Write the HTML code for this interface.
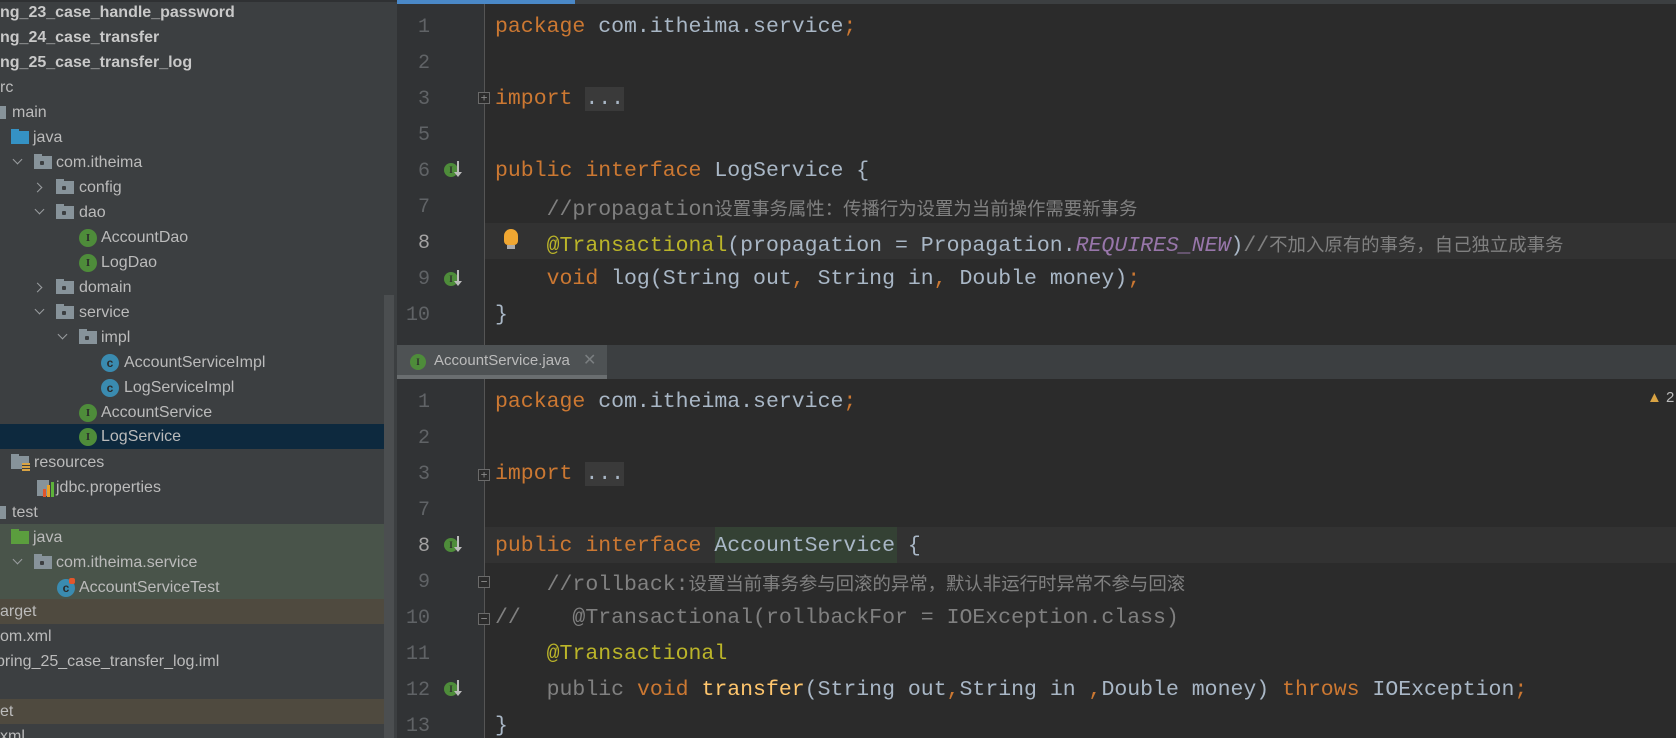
<!DOCTYPE html>
<html><head><meta charset="utf-8"><style>
*{margin:0;padding:0;box-sizing:border-box}
body{width:1676px;height:738px;overflow:hidden;background:#2b2b2b;position:relative;font-family:"Liberation Sans","Noto Sans CJK SC",sans-serif}
.side{position:absolute;left:0;top:0;width:397px;height:738px;background:#3c3f41;overflow:hidden}
.r{position:absolute;left:0;width:384px;height:25px;line-height:25px;font-size:16px;color:#bbbbbb;white-space:nowrap}
.r span.t{position:absolute;top:0}
.b{font-weight:bold;color:#c9c9c9}
.ar{position:absolute;top:8px;width:7px;height:7px;border-right:1.5px solid #9a9da0;border-bottom:1.5px solid #9a9da0}
.dn{transform:rotate(45deg);top:6px}
.rt{transform:rotate(-45deg);top:9px}
.fd{position:absolute;top:6px;width:18px;height:13px;background:#87939a}
.fd::before{content:"";position:absolute;left:0;top:-2px;width:8px;height:3px;background:inherit}
.fd.p::after{content:"";position:absolute;left:6px;top:5px;width:4px;height:4px;background:#3c3f41;border-radius:1px}
.ic{position:absolute;top:4px;width:18px;height:18px;border-radius:50%;font:bold 11px "Liberation Serif",serif;text-align:center;line-height:18px;color:#2b2b2b}
.ii{background:#4e8c3a}
.cc{background:#3a8bb0;font-family:"Liberation Sans";font-size:12px}
.ed{position:absolute;left:397px;width:1279px;background:#2b2b2b;overflow:hidden}
.gut{position:absolute;left:0;top:0;bottom:0;width:88px;background:#313335}
.gl{position:absolute;left:87px;top:0;bottom:0;width:1px;background:#555555}
.ln{position:absolute;left:0;width:33px;text-align:right;font:20px "Liberation Mono",monospace;color:#606366;height:36px;line-height:36px;transform:translateY(2px)}
.cl{position:absolute;left:98px;height:36px;line-height:36px;font:21.5px "Liberation Mono","Noto Sans CJK SC",monospace;color:#a9b7c6;white-space:pre;transform:translateY(7px)}
.k{color:#cc7832}.c{color:#808080}.a{color:#bbb529}.s{color:#9876aa;font-style:italic}.m{color:#ffc66d}
.z{font-family:"Noto Sans CJK SC",sans-serif;font-size:18.4px;color:#808080}
.cur{position:absolute;left:88px;right:0;height:36px;background:#323232}
.gi{position:absolute;width:14px;height:14px;border-radius:50%;background:#4e8c3a;font:bold 9px "Liberation Serif",serif;color:#2b2b2b;text-align:center;line-height:14px}
.garr{position:absolute;width:2px;height:14px;background:#bbb}
.garr::after{content:"";position:absolute;left:-3px;bottom:-2px;border-left:4px solid transparent;border-right:4px solid transparent;border-top:5px solid #bbb}
.fold{position:absolute;width:12px;height:12px;border:1px solid #6a6a6a;background:#2b2b2b;color:#8a8a8a;font:11px monospace;line-height:10px;text-align:center}
.dots{background:#3a3a3a;color:#a9b7c6}
</style></head><body>
<div class="side">
<div style="position:absolute;left:0;top:0;width:397px;height:2px;background:#2f3133"></div>
<div class="r b" style="top:0"><span class="t" style="left:0">ng_23_case_handle_password</span></div>
<div class="r b" style="top:25px"><span class="t" style="left:0">ng_24_case_transfer</span></div>
<div class="r b" style="top:50px"><span class="t" style="left:0">ng_25_case_transfer_log</span></div>
<div class="r" style="top:75px"><span class="t" style="left:0">rc</span></div>
<div class="r" style="top:100px"><div class="fd" style="left:-12px"></div><span class="t" style="left:12px">main</span></div>
<div class="r" style="top:125px"><div class="fd" style="left:11px;background:#3592c4"></div><span class="t" style="left:33px">java</span></div>
<div class="r" style="top:150px"><div class="ar dn" style="left:14px"></div><div class="fd p" style="left:34px"></div><span class="t" style="left:56px">com.itheima</span></div>
<div class="r" style="top:175px"><div class="ar rt" style="left:34px"></div><div class="fd p" style="left:56px"></div><span class="t" style="left:79px">config</span></div>
<div class="r" style="top:200px"><div class="ar dn" style="left:36px"></div><div class="fd p" style="left:56px"></div><span class="t" style="left:79px">dao</span></div>
<div class="r" style="top:225px"><div class="ic ii" style="left:79px">I</div><span class="t" style="left:101px">AccountDao</span></div>
<div class="r" style="top:250px"><div class="ic ii" style="left:79px">I</div><span class="t" style="left:101px">LogDao</span></div>
<div class="r" style="top:275px"><div class="ar rt" style="left:34px"></div><div class="fd p" style="left:56px"></div><span class="t" style="left:79px">domain</span></div>
<div class="r" style="top:300px"><div class="ar dn" style="left:36px"></div><div class="fd p" style="left:56px"></div><span class="t" style="left:79px">service</span></div>
<div class="r" style="top:325px"><div class="ar dn" style="left:59px"></div><div class="fd p" style="left:79px"></div><span class="t" style="left:101px">impl</span></div>
<div class="r" style="top:350px"><div class="ic cc" style="left:101px">c</div><span class="t" style="left:124px">AccountServiceImpl</span></div>
<div class="r" style="top:375px"><div class="ic cc" style="left:101px">c</div><span class="t" style="left:124px">LogServiceImpl</span></div>
<div class="r" style="top:400px"><div class="ic ii" style="left:79px">I</div><span class="t" style="left:101px">AccountService</span></div>
<div class="r" style="top:424px;background:#0d293e;height:25px"><div class="ic ii" style="left:79px">I</div><span class="t" style="left:101px">LogService</span></div>
<div class="r" style="top:450px"><div class="fd" style="left:11px"></div><div style="position:absolute;left:22px;top:13px;width:8px;height:9px;background:repeating-linear-gradient(#d9a343 0 2px,#3c3f41 2px 3px)"></div><span class="t" style="left:34px">resources</span></div>
<div class="r" style="top:475px"><div style="position:absolute;left:37px;top:5px;width:12px;height:16px;background:#87939a"></div><div style="position:absolute;left:43px;top:14px;width:3px;height:8px;background:#e2562b"></div><div style="position:absolute;left:47px;top:10px;width:3px;height:12px;background:#e9a229"></div><div style="position:absolute;left:51px;top:7px;width:3px;height:15px;background:#5db33a"></div><span class="t" style="left:56px">jdbc.properties</span></div>
<div class="r" style="top:500px"><div class="fd" style="left:-12px"></div><span class="t" style="left:12px">test</span></div>
<div style="position:absolute;left:0;top:524px;width:384px;height:75px;background:#49544a"></div>
<div class="r" style="top:525px"><div class="fd" style="left:11px;background:#5b9e3e"></div><span class="t" style="left:33px">java</span></div>
<div class="r" style="top:550px"><div class="ar dn" style="left:14px"></div><div class="fd p" style="left:34px;background:#87939a"></div><span class="t" style="left:56px">com.itheima.service</span></div>
<div class="r" style="top:575px"><div class="ic cc" style="left:57px">c</div><div style="position:absolute;left:69px;top:3px;width:6px;height:6px;background:#e2562b;border-radius:2px"></div><span class="t" style="left:79px">AccountServiceTest</span></div>
<div style="position:absolute;left:0;top:599px;width:384px;height:25px;background:#4f4a3f"></div>
<div class="r" style="top:599px"><span class="t" style="left:0">arget</span></div>
<div class="r" style="top:624px"><span class="t" style="left:0">om.xml</span></div>
<div class="r" style="top:649px"><span class="t" style="left:-4px">pring_25_case_transfer_log.iml</span></div>
<div style="position:absolute;left:0;top:699px;width:384px;height:25px;background:#4f4a3f"></div>
<div class="r" style="top:699px"><span class="t" style="left:0">et</span></div>
<div class="r" style="top:724px"><span class="t" style="left:0">xml</span></div>
<div style="position:absolute;left:384px;top:295px;width:10px;height:443px;background:#4b4e50"></div>
</div>

<!-- top editor -->
<div class="ed" style="top:0;height:345px">
<div class="gut"></div><div class="gl"></div>
<div style="position:absolute;left:0;top:0;width:178px;height:4px;background:#4a88c7"></div>
<div style="position:absolute;left:178px;top:0;right:0;height:4px;background:#3c3f41"></div>
<div class="cur" style="top:223px"></div>
<div class="ln" style="top:8px">1</div>
<div class="ln" style="top:44px">2</div>
<div class="ln" style="top:80px">3</div>
<div class="ln" style="top:116px">5</div>
<div class="ln" style="top:152px">6</div>
<div class="ln" style="top:188px">7</div>
<div class="ln" style="top:224px;color:#a4a3a3">8</div>
<div class="ln" style="top:260px">9</div>
<div class="ln" style="top:296px">10</div>
<div class="gi" style="left:47px;top:163px">I</div><div class="garr" style="left:60px;top:161px"></div>
<div class="gi" style="left:47px;top:272px">I</div><div class="garr" style="left:60px;top:270px"></div>
<div class="fold" style="left:81px;top:92px">+</div>
<div style="position:absolute;left:107px;top:229px;width:14px;height:16px;background:#f0a732;border-radius:7px 7px 4px 4px"></div>
<div style="position:absolute;left:110px;top:245px;width:8px;height:4px;background:#aaa"></div>
<div class="cl" style="top:8px"><span class="k">package</span> com.itheima.service<span class="k">;</span></div>
<div class="cl" style="top:80px"><span class="k">import</span> <span class="dots">...</span></div>
<div class="cl" style="top:152px"><span class="k">public interface</span> LogService {</div>
<div class="cl" style="top:188px"><span class="c">    //propagation</span><span class="z">设置事务属性：传播行为设置为当前操作需要新事务</span></div>
<div class="cl" style="top:224px">    <span class="a">@Transactional</span>(propagation = Propagation.<span class="s">REQUIRES_NEW</span>)<span class="c">//</span><span class="z">不加入原有的事务，自己独立成事务</span></div>
<div class="cl" style="top:260px">    <span class="k">void</span> log(String out<span class="k">,</span> String in<span class="k">,</span> Double money)<span class="k">;</span></div>
<div class="cl" style="top:296px">}</div>
</div>

<!-- tab bar -->
<div style="position:absolute;left:397px;top:345px;width:1279px;height:34px;background:#3c3f41">
<div style="position:absolute;left:0;top:0;width:210px;height:34px;background:#4e5254"></div>
<div style="position:absolute;left:0;top:30px;width:210px;height:4px;background:#6a6e70"></div>
<div class="gi" style="left:13px;top:9px;width:16px;height:16px;line-height:16px">I</div>
<div style="position:absolute;left:37px;top:0;line-height:32px;font-size:15px;color:#bbbbbb">AccountService.java</div>
<div style="position:absolute;left:186px;top:0;line-height:32px;font-size:16px;color:#7a7e80">✕</div>
</div>

<!-- bottom editor -->
<div class="ed" style="top:379px;height:359px">
<div class="gut"></div><div class="gl"></div>
<div class="cur" style="top:148px"></div>
<div class="ln" style="top:4px">1</div>
<div class="ln" style="top:40px">2</div>
<div class="ln" style="top:76px">3</div>
<div class="ln" style="top:112px">7</div>
<div class="ln" style="top:148px;color:#a4a3a3">8</div>
<div class="ln" style="top:184px">9</div>
<div class="ln" style="top:220px">10</div>
<div class="ln" style="top:256px">11</div>
<div class="ln" style="top:292px">12</div>
<div class="ln" style="top:328px">13</div>
<div class="gi" style="left:47px;top:159px">I</div><div class="garr" style="left:60px;top:157px"></div>
<div class="gi" style="left:47px;top:303px">I</div><div class="garr" style="left:60px;top:301px"></div>
<div class="fold" style="left:81px;top:90px">+</div>
<div class="fold" style="left:81px;top:197px">−</div>
<div class="fold" style="left:81px;top:234px">−</div>
<div style="position:absolute;left:318px;top:148px;width:182px;height:36px;background:#344134"></div>
<div style="position:absolute;left:1250px;top:10px;font-size:15px;color:#d9a343">▲<span style="color:#bbb;font-size:15px"> 2</span></div>
<div class="cl" style="top:4px"><span class="k">package</span> com.itheima.service<span class="k">;</span></div>
<div class="cl" style="top:76px"><span class="k">import</span> <span class="dots">...</span></div>
<div class="cl" style="top:148px"><span class="k">public interface</span> AccountService {</div>
<div class="cl" style="top:184px"><span class="c">    //rollback:</span><span class="z">设置当前事务参与回滚的异常，默认非运行时异常不参与回滚</span></div>
<div class="cl c" style="top:220px">//    @Transactional(rollbackFor = IOException.class)</div>
<div class="cl" style="top:256px">    <span class="a">@Transactional</span></div>
<div class="cl" style="top:292px">    <span class="c">public</span> <span class="k">void</span> <span class="m">transfer</span>(String out<span class="k">,</span>String in <span class="k">,</span>Double money) <span class="k">throws</span> IOException<span class="k">;</span></div>
<div class="cl" style="top:328px">}</div>
</div>
</body></html>
